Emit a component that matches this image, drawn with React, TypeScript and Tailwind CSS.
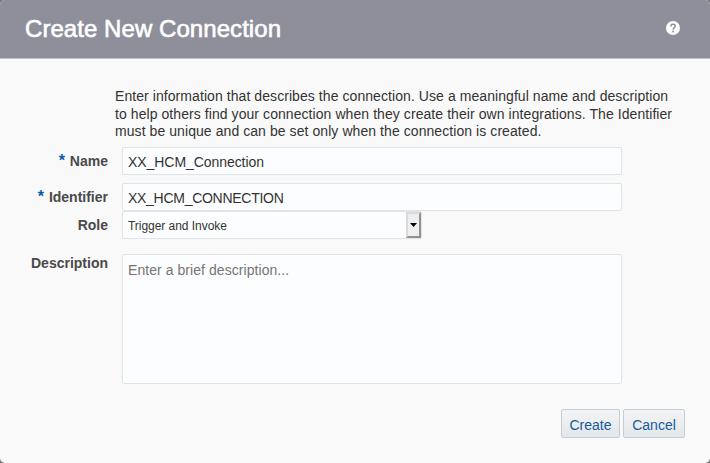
import type { ReactNode } from 'react';

function Label({ children, required }: { children: ReactNode; required?: boolean }) {
  return (
    <div className="flex w-[108px] shrink-0 justify-end gap-[5px] whitespace-nowrap text-[14px] font-bold leading-[18px] text-[#4a4a4a]">
      {required && <span className="text-[16px] text-[#0b5cab]">*</span>}
      <span>{children}</span>
    </div>
  );
}

const field = 'border border-[#dfe4e7] rounded-[2px] bg-[#fcfdfe] text-[#333333]';

export default function App() {
  return (
    <div className="h-[463px] w-[710px] overflow-hidden bg-[#777777] font-['Liberation_Sans',Arial,sans-serif]">
      <div className="flex h-full flex-col overflow-hidden rounded-[5px] bg-[#f9f9f9]">
        <header className="flex h-[59px] shrink-0 items-center justify-between border-b border-[#bcc6d0] bg-[#8e8f9b] pl-[25px] pr-[30px]">
          <h1 className="whitespace-nowrap text-[24px] leading-[28px] tracking-[0.06px] text-white [-webkit-text-stroke:0.6px_white]">Create New Connection</h1>
          <svg className="mb-[2px] size-[14px]" viewBox="0 0 14 14" fill="none">
            <circle cx="7" cy="7" r="7" fill="#fff" />
            <path d="M4.9 5.4C4.9 4 5.8 3.2 7 3.2S9.2 4 9.2 5.2C9.2 6.7 7.1 6.7 7.1 8.5" stroke="#8e8f9b" strokeWidth="1.5" />
            <circle cx="7.1" cy="10.5" r="0.95" fill="#8e8f9b" />
          </svg>
        </header>
        <main className="flex flex-col pt-[29px]">
          <p className="ml-[115px] h-[59px] whitespace-nowrap text-[14px] leading-[17.5px] tracking-[0.07px] text-[#333333]">
            <span className="block">Enter information that describes the connection. Use a meaningful name and description</span>
            <span className="block">to help others find your connection when they create their own integrations. The Identifier</span>
            <span className="block">must be unique and can be set only when the connection is created.</span>
          </p>
          <div className="flex gap-[14px]">
            <div className="pt-[5px]"><Label required>Name</Label></div>
            <div className={`${field} flex h-[28px] w-[500px] items-center pl-[5px] pt-[2px] text-[14px] tracking-[-0.06px]`}>XX_HCM_Connection</div>
          </div>
          <div className="mt-[8px] flex gap-[14px]">
            <div className="pt-[5px]"><Label required>Identifier</Label></div>
            <div className={`${field} flex h-[28px] w-[500px] items-center pl-[5px] pt-[2px] text-[14px] tracking-[-0.28px]`}>XX_HCM_CONNECTION</div>
          </div>
          <div className="flex gap-[14px]">
            <div className="pt-[5px]"><Label>Role</Label></div>
            <div className={`${field} flex h-[28px] w-[300px] items-center justify-between pl-[5px] text-[12px] tracking-[-0.04px]`}>
              <span className="pt-[1px]">Trigger and Invoke</span>
              <span className="flex h-[26px] w-[15px] items-center justify-center border-2 border-b-[#929292] border-l-[#dadada] border-r-[#929292] border-t-[#dadada] bg-[#efefef]">
                <svg className="h-[4px] w-[7px] shrink-0" viewBox="0 0 7 4"><path d="M0 0h7L3.5 4z" fill="#000" /></svg>
              </span>
            </div>
          </div>
          <div className="mt-[15px] flex gap-[14px]">
            <Label>Description</Label>
            <div className={`${field} h-[130px] w-[500px] pl-[5px] pt-[6px] text-[14px] leading-[18px] tracking-[0.06px]`}>
              <span className="text-[#757575]">Enter a brief description...</span>
            </div>
          </div>
          <div className="mt-[25px] flex justify-end gap-[3px] pr-[25px] text-[14px] text-[#145c9e]">
            <button className="h-[29px] w-[59px] rounded-[2px] border border-[#c4ced7] bg-gradient-to-b from-[#f3f4f5] to-[#e3e7e9] pt-[4px]">Create</button>
            <button className="h-[29px] w-[62px] rounded-[2px] border border-[#c4ced7] bg-gradient-to-b from-[#f3f4f5] to-[#e3e7e9] pt-[4px]">Cancel</button>
          </div>
        </main>
      </div>
    </div>
  );
}
